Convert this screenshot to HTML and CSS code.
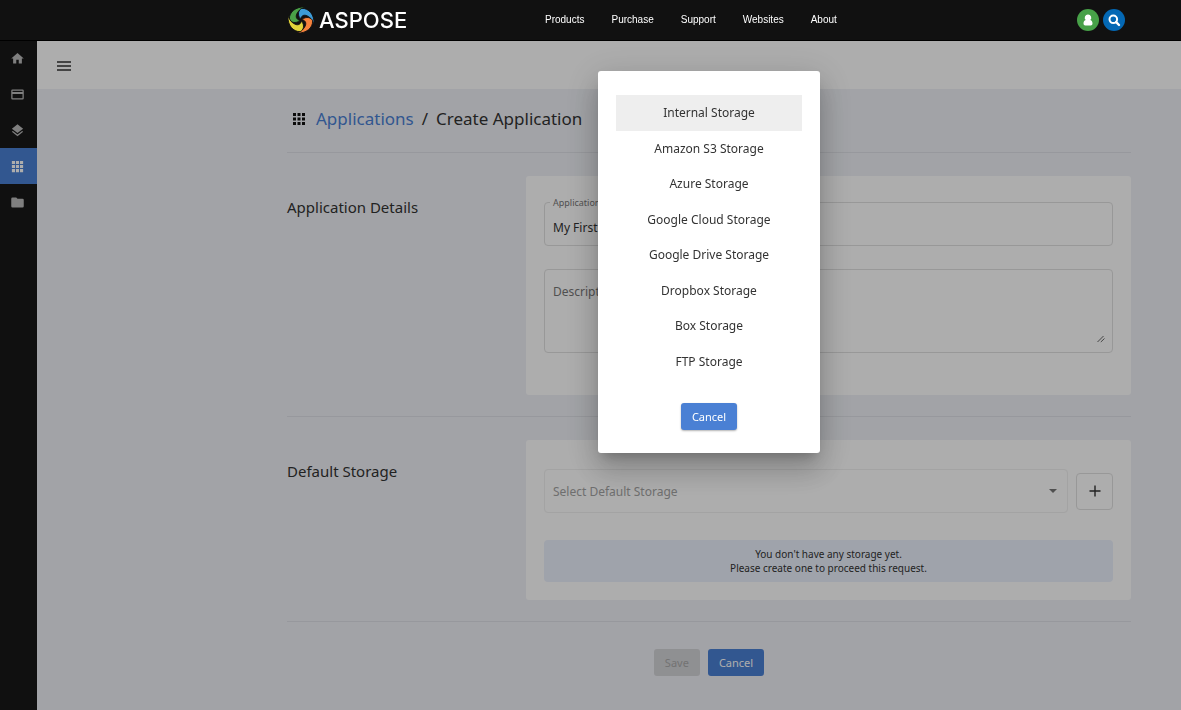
FILE: index.html
```html
<!DOCTYPE html>
<html lang="en">
<head>
<meta charset="utf-8">
<title>Create Application</title>
<link rel="stylesheet" href="styles.css">
</head>
<body>
<header class="topbar">
  <a class="brand" href="#">
    <svg class="brand-mark" viewBox="0 0 26 26" aria-hidden="true">
      <defs><path id="blade" stroke="#111" stroke-width=".9" d="M17 0C8-.6 1 5 1.400 12.200C2.500 15.500 7.500 17 12.300 13.500C9.500 13 7.600 11 8.400 8C9.500 4 13 1.800 17 0Z"/></defs>
      <use href="#blade" fill="#4aa147"/>
      <use href="#blade" fill="#3d9bd6" transform="rotate(90 13 13)"/>
      <use href="#blade" fill="#f5813c" transform="rotate(180 13 13)"/>
      <use href="#blade" fill="#e2d43a" transform="rotate(270 13 13)"/>
    </svg>
    <span>ASPOSE</span>
  </a>
  <nav class="topnav">
    <a href="#">Products</a><a href="#">Purchase</a><a href="#">Support</a><a href="#">Websites</a><a href="#">About</a>
  </nav>
  <div class="top-actions">
    <button class="round green" aria-label="Account"><svg viewBox="0 0 22 22"><path fill="#fff" d="M11 5.500a3.200 3.200 0 0 1 2.300 5.500c1.500.3 2.200 1.600 2.200 3.600 0 1.300-.7 1.900-1.800 1.900H8.300c-1.100 0-1.800-.6-1.800-1.900 0-2 .7-3.300 2.200-3.600A3.200 3.200 0 0 1 11 5.500z"/></svg></button>
    <button class="round blue" aria-label="Search"><svg viewBox="0 0 22 22"><circle cx="10.300" cy="10.300" r="3.800" fill="none" stroke="#fff" stroke-width="2"/><path d="M13.200 13.200l2.800 2.800" stroke="#fff" stroke-width="2.400" stroke-linecap="round"/></svg></button>
  </div>
</header>

<div class="layout">
  <nav class="sidebar" aria-label="Sections">
    <a href="#" aria-label="Home"><svg viewBox="0 0 24 24"><path d="M10 20v-6h4v6h5v-8h3L12 3 2 12h3v8z"/></svg></a>
    <a href="#" aria-label="Billing"><svg viewBox="0 0 24 24"><path fill-rule="evenodd" d="M4 4h16a2 2 0 0 1 2 2v12a2 2 0 0 1-2 2H4a2 2 0 0 1-2-2V6a2 2 0 0 1 2-2zm0 2v2h16V6zm0 5v7h16v-7z"/></svg></a>
    <a href="#" aria-label="Layers"><svg viewBox="0 0 24 24"><path d="M11.990 18.540l-7.370-5.730L3 14.070l9 7 9-7-1.630-1.270zM12 16l7.360-5.730L21 9l-9-7-9 7 1.630 1.270z"/></svg></a>
    <a href="#" class="active" aria-label="Applications" aria-current="page"><svg viewBox="0 0 24 24"><path d="M3 3h5v5H3zM9.500 3h5v5h-5zM16 3h5v5h-5zM3 9.500h5v5H3zM9.500 9.500h5v5h-5zM16 9.500h5v5h-5zM3 16h5v5H3zM9.500 16h5v5h-5zM16 16h5v5h-5z"/></svg></a>
    <a href="#" aria-label="Files"><svg viewBox="0 0 24 24"><path d="M10 4H4a2 2 0 0 0-2 2v12a2 2 0 0 0 2 2h16a2 2 0 0 0 2-2V8a2 2 0 0 0-2-2h-8z"/></svg></a>
  </nav>

  <div class="page">
    <div class="toolbar">
      <button class="menu" aria-label="Toggle menu"><svg viewBox="0 0 14 10"><path d="M0 1h14M0 5h14M0 9h14" stroke="currentColor" stroke-width="1.500"/></svg></button>
    </div>
    <main class="content">
      <h1 class="crumbs">
        <svg viewBox="0 0 12 12" aria-hidden="true"><path d="M0 0h3v3H0zM4.500 0h3v3h-3zM9 0h3v3H9zM0 4.500h3v3H0zM4.500 4.500h3v3h-3zM9 4.500h3v3H9zM0 9h3v3H0zM4.500 9h3v3h-3zM9 9h3v3H9z"/></svg>
        <a href="#">Applications</a><span>/</span><span>Create Application</span>
      </h1>

      <form>
        <section class="row">
          <h2>Application Details</h2>
          <div class="card details">
            <div class="field">
              <label for="name">Application Name</label>
              <input id="name" type="text" value="My First Application">
            </div>
            <div class="area">
              <textarea aria-label="Description" placeholder="Description"></textarea>
              <svg class="grip" viewBox="0 0 8 8" aria-hidden="true"><path d="M.5 7L6.500 1M3.800 7L7.500 3.500" stroke="#666" fill="none"/></svg>
            </div>
          </div>
        </section>

        <section class="row">
          <h2>Default Storage</h2>
          <div class="card storage">
            <div class="picker">
              <div class="select">
                <select aria-label="Default storage" disabled><option>Select Default Storage</option></select>
                <svg class="caret" viewBox="0 0 8 4" aria-hidden="true"><path d="M0 0h8L4 4z" fill="#777"/></svg>
              </div>
              <button type="button" class="add" aria-label="Add storage"><svg viewBox="0 0 12 12"><path d="M6 .5v11M.5 6h11" stroke="currentColor" stroke-width="1.400"/></svg></button>
            </div>
            <p class="note">You don't have any storage yet.<br>Please create one to proceed this request.</p>
          </div>
        </section>

        <div class="actions">
          <button type="button" class="btn" disabled>Save</button>
          <button type="button" class="btn primary">Cancel</button>
        </div>
      </form>
    </main>
  </div>
</div>

<div class="overlay">
  <div class="dialog" role="dialog" aria-modal="true" aria-label="Choose storage type">
    <div class="options">
      <button class="selected">Internal Storage</button>
      <button>Amazon S3 Storage</button>
      <button>Azure Storage</button>
      <button>Google Cloud Storage</button>
      <button>Google Drive Storage</button>
      <button>Dropbox Storage</button>
      <button>Box Storage</button>
      <button>FTP Storage</button>
    </div>
    <button class="btn primary raised">Cancel</button>
  </div>
</div>
</body>
</html>
```

FILE: styles.css
```css
* { box-sizing: border-box; }
body {
  margin: 0;
  min-height: 100vh;
  display: flex;
  flex-direction: column;
  font: 12px/16px "Noto Sans", sans-serif;
  color: #333;
  background: #eff1f6;
}
a { text-decoration: none; color: inherit; }
button { font: inherit; border: 0; padding: 0; background: none; color: inherit; cursor: pointer; }
svg { display: block; }

.topbar {
  position: relative;
  z-index: 20;
  display: flex;
  align-items: center;
  height: 40px;
  padding: 0 56px 1px 288px;
  background: #111;
  color: #fff;
  box-shadow: 0 1px 0 #000;
}
.brand { display: flex; align-items: center; gap: 5px; width: 257px; font: 500 22px/26px Inter, sans-serif; }
.brand-mark { width: 26px; height: 26px; }
.topnav { display: flex; gap: 27px; font: 10px/16px "Liberation Sans", Arial, sans-serif; }
.top-actions { display: flex; gap: 4px; margin-left: auto; }
.round { width: 22px; height: 22px; border-radius: 50%; }
.green { background: #47a148; }
.blue { background: #0468b4; }

.layout { flex: 1; display: flex; }
.sidebar { width: 37px; background: #191919; color: #bbb; }
.sidebar a { display: flex; align-items: center; justify-content: center; height: 36px; padding-right: 2px; }
.sidebar svg { width: 15px; height: 15px; fill: currentColor; }
.sidebar .active { background: #4a80d4; color: #fff; }

.page { flex: 1; min-width: 0; }
.toolbar { display: flex; align-items: center; height: 49px; padding: 2px 20px 0; background: #fff; }
.menu svg { width: 14px; height: 10px; }
.content { padding: 18px 50px 24px 250px; }
.crumbs {
  display: flex;
  align-items: center;
  gap: 8px;
  margin: 0;
  padding: 0 6px 21px;
  font-size: 17px;
  line-height: 24px;
  font-weight: 400;
  border-bottom: 1px solid #dfe1e7;
}
.crumbs svg { width: 12px; height: 12px; margin-right: 3px; fill: #111; }
.crumbs a { color: #4a80d4; }

.row { display: flex; padding: 23px 0 21px; border-bottom: 1px solid #dfe1e7; }
.row h2 { flex: 0 0 239px; margin: 20px 0 0; font-size: 15px; line-height: 22px; font-weight: 400; }
.card { flex: 1; min-width: 0; background: #fff; border-radius: 3px; }
.details { padding: 26px 18px 42px; }
.storage { padding: 29px 18px 18px; }
.field { position: relative; margin-bottom: 23px; }
.field label { position: absolute; top: -6px; left: 6px; padding: 0 3px; font-size: 9px; line-height: 14px; color: #777; background: #fff; }
input, textarea, select {
  display: block;
  width: 100%;
  font: 12px/16px "Noto Sans", sans-serif;
  color: #333;
  background: transparent;
  border: 1px solid #e0e0e0;
  border-radius: 4px;
  padding: 7px 8px 0;
}
input { height: 44px; }
textarea { height: 84px; padding-top: 14px; resize: none; }
textarea::placeholder { color: #777; }
.area { position: relative; }
.grip { position: absolute; right: 8px; bottom: 10px; width: 8px; height: 8px; }

.picker { display: flex; align-items: center; gap: 8px; }
.select { position: relative; flex: 1; }
select { height: 44px; padding-top: 2px; appearance: none; border-color: #f0f0f0; opacity: 1; }
select:disabled { color: #a3a3a3; opacity: 1; }
.caret { position: absolute; right: 11px; top: 20px; width: 8px; height: 4px; }
.add { display: flex; align-items: center; justify-content: center; width: 37px; height: 37px; border: 1px solid #e0e0e0; border-radius: 4px; }
.add svg { width: 12px; height: 12px; }
.note { margin: 27px 0 0; padding: 7px; font-size: 10px; line-height: 14px; text-align: center; background: #ebf1fd; border-radius: 4px; }

.actions { display: flex; justify-content: center; gap: 8px; padding-top: 27px; }
.btn { height: 27px; padding: 0 11px; font-size: 11px; line-height: 26px; border-radius: 3px; }
.btn:disabled { background: #d3d4d8; color: #aaa; }
.primary { background: #4a80d4; color: #fff; }
.raised { box-shadow: 0 1px 2px rgba(0, 0, 0, .3); }

.overlay {
  position: fixed;
  inset: 0;
  z-index: 10;
  display: flex;
  justify-content: center;
  align-items: flex-start;
  padding: 71px 50px 0 287px;
  background: rgba(0, 0, 0, .32);
}
.dialog {
  display: flex;
  flex-direction: column;
  align-items: center;
  gap: 24px;
  width: 222px;
  padding: 24px 18px 23px;
  background: #fff;
  border-radius: 3px;
  box-shadow: 0 8px 11px -5px rgba(0, 0, 0, .2), 0 18px 28px 2px rgba(0, 0, 0, .14), 0 7px 34px 6px rgba(0, 0, 0, .12);
}
.options { display: grid; grid-auto-rows: 1fr; align-self: stretch; height: 284px; }
.options button { padding-top: 1px; font-size: 12px; }
.options .selected { background: #eee; }
```
